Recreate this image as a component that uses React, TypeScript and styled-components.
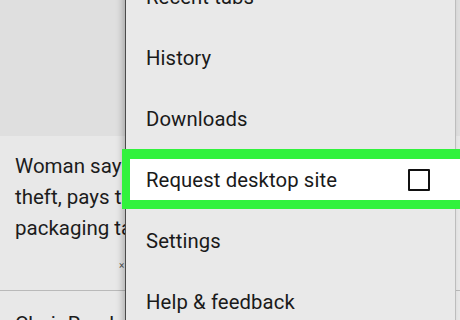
import React from 'react';
import styled, { createGlobalStyle } from 'styled-components';

const GlobalStyle = createGlobalStyle`
  html, body {
    margin: 0;
    padding: 0;
    background: #e8e8e8;
  }
  body {
    font-family: Roboto, "Noto Sans", "Liberation Sans", sans-serif;
  }
`;

const menuItems = [
  'Recent tabs',
  'History',
  'Downloads',
  'Request desktop site',
  'Settings',
  'Help & feedback',
];

const App: React.FC = () => {
  return (
    <>
      <GlobalStyle />
      <Screen>
        <TopCard />
        <Article>
          <Headline>
            Woman says she stopped porch
            <br />
            theft, pays tribute with
            <br />
            packaging tape trick
          </Headline>
          <Source>×</Source>
        </Article>
        <Divider />
        <NextArticle>Chair Readers share their story</NextArticle>

        <Menu>
          {menuItems.map((label) => (
            <MenuItem key={label} highlighted={label === 'Request desktop site'}>
              <ItemLabel>{label}</ItemLabel>
              {label === 'Request desktop site' && <Checkbox />}
            </MenuItem>
          ))}
        </Menu>
      </Screen>
    </>
  );
};

const Screen = styled.div`
  position: relative;
  width: 460px;
  height: 320px;
  overflow: hidden;
  background: #e8e8e8;
  display: flex;
  flex-direction: column;
`;

const TopCard = styled.div`
  height: 136px;
  background: #dfdfdf;
  flex-shrink: 0;
`;

const Article = styled.div`
  position: relative;
  height: 154px;
  padding: 15px 0 0 15px;
  box-sizing: border-box;
  flex-shrink: 0;
`;

const Headline = styled.div`
  font-size: 20.5px;
  line-height: 31px;
  color: #1c1c1c;
  white-space: nowrap;
`;

const Source = styled.div`
  position: absolute;
  left: 119px;
  top: 124px;
  font-size: 10px;
  color: #555;
`;

const Divider = styled.div`
  height: 1px;
  background: #b9b9b9;
  flex-shrink: 0;
`;

const NextArticle = styled.div`
  padding: 22px 0 0 15px;
  font-size: 20.5px;
  line-height: 22px;
  color: #1c1c1c;
  white-space: nowrap;
`;

const Menu = styled.div`
  position: absolute;
  left: 125px;
  top: -34px;
  width: 329px;
  background: #e9e9e9;
  border-left: 1px solid #4a4a4a;
  border-right: 1px solid #bdbdbd;
  box-shadow: -3px 0 6px rgba(0, 0, 0, 0.22);
  display: flex;
  flex-direction: column;
`;

const MenuItem = styled.div<{ highlighted?: boolean }>`
  position: relative;
  height: 61px;
  display: flex;
  align-items: center;
  justify-content: space-between;
  padding: 0 24px 0 20px;

  ${({ highlighted }) =>
    highlighted &&
    `
    &::before {
      content: '';
      position: absolute;
      left: -4px;
      right: -16px;
      top: 0;
      bottom: 1px;
      border-style: solid;
      border-color: #31f23d;
      border-width: 10px 10px 9px 8px;
      background: #ffffff;
    }
  `}
`;

const ItemLabel = styled.span`
  position: relative;
  font-size: 20.3px;
  color: #1a1a1a;
  letter-spacing: 0.1px;
`;

const Checkbox = styled.span`
  position: relative;
  width: 18px;
  height: 18px;
  border: 2px solid #111;
  border-radius: 1px;
  margin-right: 1px;
`;

export default App;
